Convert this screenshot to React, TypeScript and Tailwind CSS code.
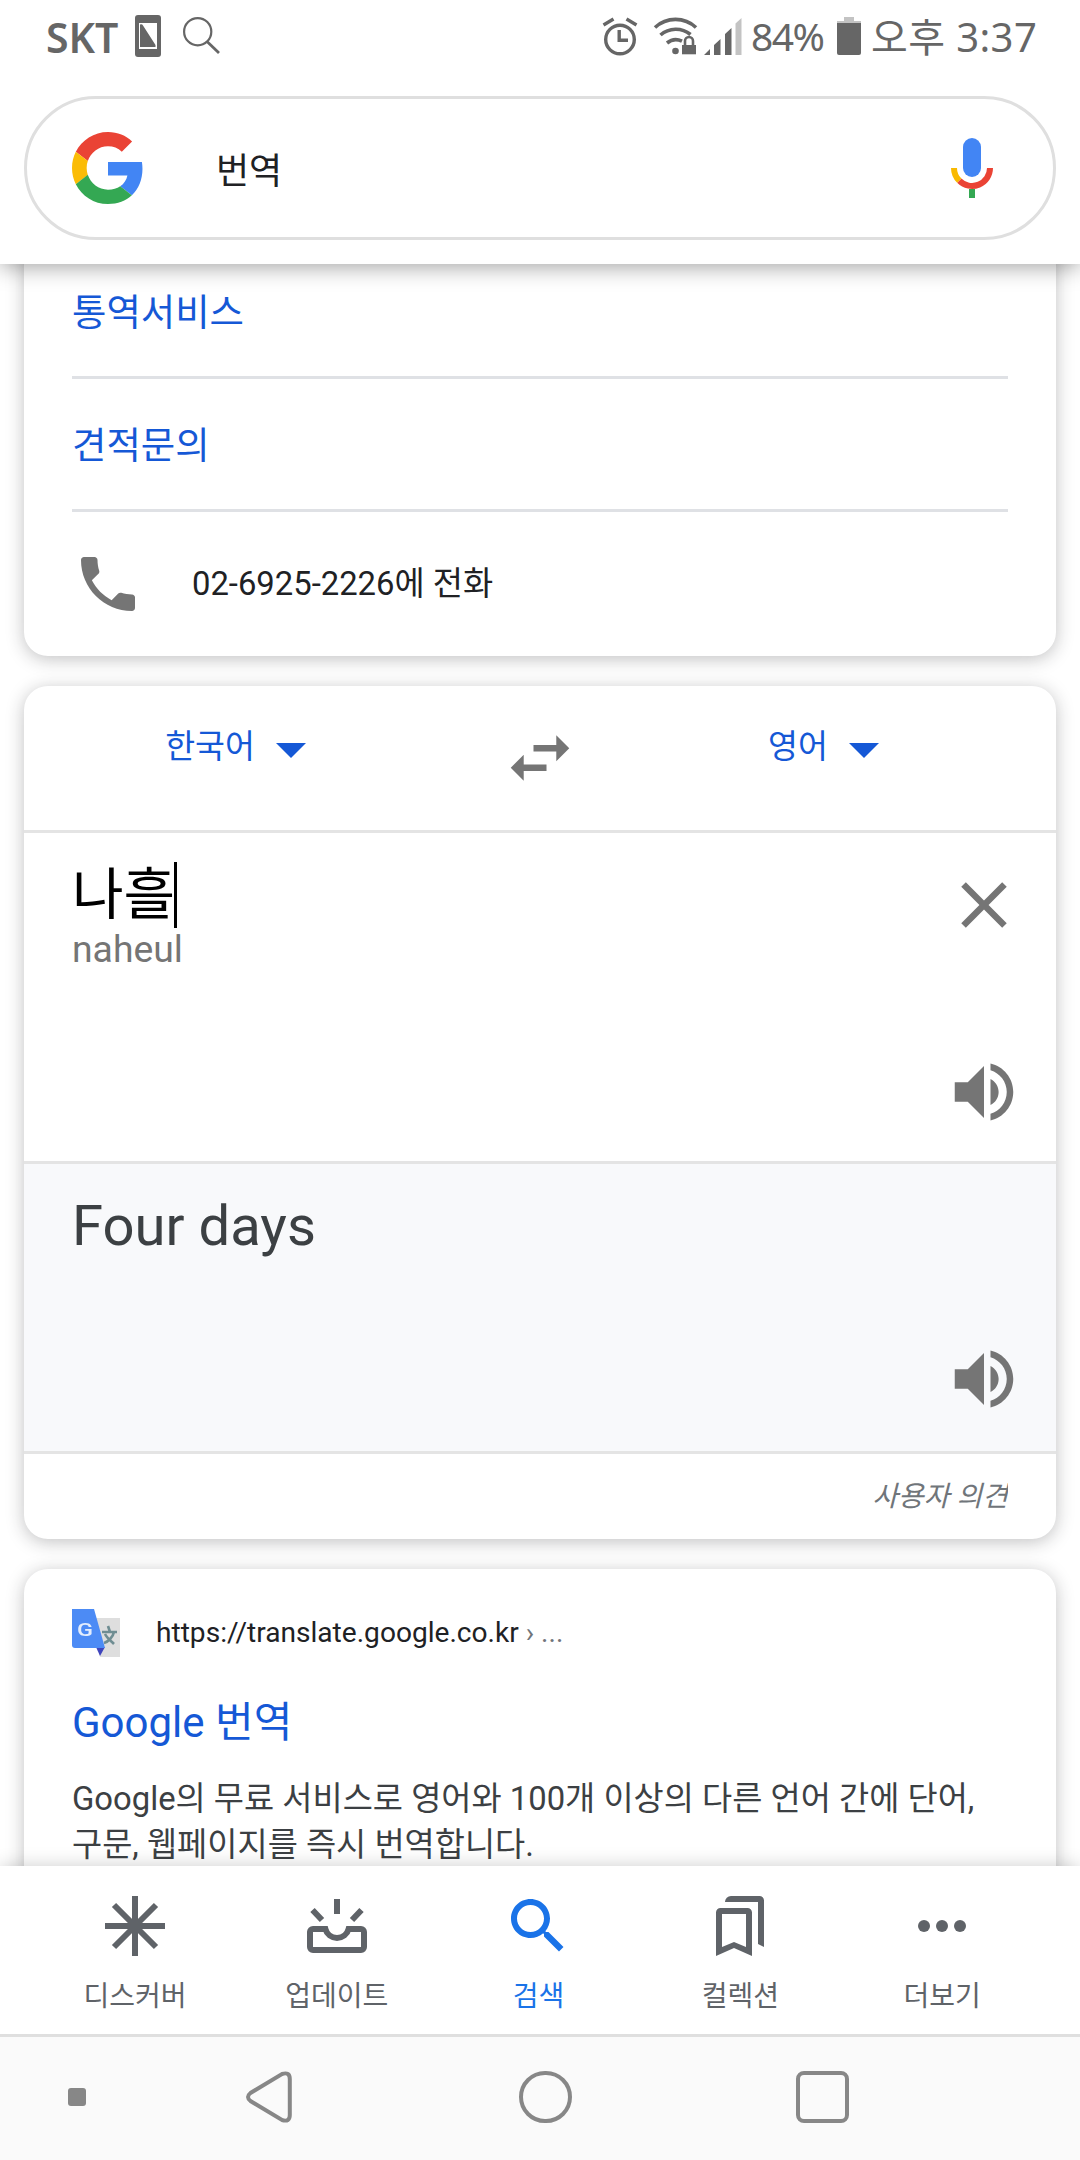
import React from "react";
import { clsx } from "clsx";

const siteLinks = ["통역서비스", "견적문의"];

const GoogleLogo = () => (
  <svg viewBox="0 0 48 48" className="w-[72px] h-[72px]">
    <path
      fill="#EA4335"
      d="M24 9.5c3.54 0 6.71 1.22 9.21 3.6l6.85-6.85C35.9 2.38 30.47 0 24 0 14.62 0 6.51 5.38 2.56 13.22l7.98 6.19C12.43 13.72 17.74 9.5 24 9.5z"
    />
    <path
      fill="#4285F4"
      d="M46.98 24.55c0-1.57-.15-3.09-.38-4.55H24v9.02h12.94c-.58 2.96-2.26 5.48-4.78 7.18l7.73 6c4.51-4.18 7.09-10.36 7.09-17.65z"
    />
    <path
      fill="#FBBC05"
      d="M10.53 28.59c-.48-1.45-.76-2.99-.76-4.59s.27-3.14.76-4.59l-7.98-6.19C.92 16.46 0 20.12 0 24c0 3.88.92 7.54 2.56 10.78l7.97-6.19z"
    />
    <path
      fill="#34A853"
      d="M24 48c6.48 0 11.93-2.13 15.89-5.81l-7.73-6c-2.15 1.45-4.92 2.3-8.16 2.3-6.26 0-11.57-4.22-13.47-9.91l-7.98 6.19C6.51 42.62 14.62 48 24 48z"
    />
  </svg>
);

const MicIcon = () => (
  <svg viewBox="0 0 72 72" className="w-[72px] h-[72px]" fill="none">
    <rect x="27" y="6" width="18" height="39" rx="9" fill="#4285F4" />
    <path d="M54 36a18 18 0 0 1-30.73 12.73" stroke="#EA4335" strokeWidth="6" />
    <path d="M18 36a18 18 0 0 0 5.27 12.73" stroke="#F9B900" strokeWidth="6" />
    <path d="M36 57v9" stroke="#34A853" strokeWidth="6" />
  </svg>
);

const SpeakerIcon = () => (
  <svg viewBox="0 0 24 24" className="w-[78px] h-[78px]" fill="#757575">
    <path d="M3 9v6h4l5 5V4L7 9H3zm13.5 3c0-1.77-1.02-3.29-2.5-4.03v8.05c1.48-.73 2.5-2.25 2.5-4.02zM14 3.23v2.06c2.89.86 5 3.54 5 6.71s-2.11 5.85-5 6.71v2.06c4.01-.91 7-4.49 7-8.77s-2.99-7.86-7-8.77z" />
  </svg>
);

const StatusBar = () => (
  <div className="h-24 flex items-start text-[#666] font-['Noto_Sans','Noto_Sans_CJK_KR',sans-serif]">
    <span className="ml-[46px] mt-[12px] w-[89px] text-[41px] leading-[50px] font-semibold">
      SKT
    </span>
    <svg viewBox="0 0 26 42" className="mt-[15px] w-[26px] h-[42px]">
      <rect width="26" height="42" rx="3" fill="#666" />
      <path d="M4 8h18v26H4z" fill="#fff" />
      <path d="M5 9.500q2-1 3 1l12.500 19.500v2H5z" fill="#666" />
    </svg>
    <svg
      viewBox="0 0 40 40"
      className="ml-[21px] mt-[16px] w-10 h-10"
      fill="none"
      stroke="#666"
      strokeWidth="2.200"
    >
      <circle cx="15.700" cy="15.700" r="13.600" />
      <path d="M25 25.500l12 11.500" strokeWidth="2.800" />
    </svg>

    {/* alarm, wifi, signal */}
    <svg
      viewBox="0 0 36 40"
      className="ml-[380px] mt-[16px] w-9 h-10"
      fill="none"
      stroke="#666"
      strokeWidth="3.400"
    >
      <circle cx="18" cy="23.500" r="14.300" />
      <path d="M17.200 14v10.200H26M1.500 9l10-6M34.500 9l-10-6" />
    </svg>
    <svg
      viewBox="0 0 46 40"
      className="ml-[15px] mt-[16px] w-[46px] h-10"
      fill="none"
      stroke="#666"
      strokeWidth="3.600"
    >
      <path d="M2 11.500a30 30 0 0 1 41 0M7.500 19a23 23 0 0 1 30-.500M14 27a14 14 0 0 1 15-1.800" />
      <circle cx="22.500" cy="35" r="3.300" fill="#666" stroke="none" />
      <path d="M29 29h14v9.300H29z" fill="#666" stroke="none" />
      <path d="M32 30v-5a4 4 0 0 1 8 0v5" strokeWidth="2.600" />
    </svg>
    <svg
      viewBox="0 0 38 38"
      className="ml-[5px] mt-[17px] w-[38px] h-[38px]"
      fill="#666"
    >
      <path d="M0 38l6-6v6zM10 28l6.500-6v16H10zM21 17l6.500-6v27H21z" />
      <path d="M31.500 6.500l6-5.500v37h-6z" fill="#c3c3c3" />
    </svg>
    <span className="ml-[9px] mt-[11px] w-[86px] text-[39px] leading-[50px] tracking-[-1.5px]">
      84%
    </span>
    <svg viewBox="0 0 24 38" className="mt-[17px] w-6 h-[38px]">
      <path d="M7 0h10v4h7v3H0V4h7z" fill="#c3c3c3" />
      <path d="M0 6h24v30a2 2 0 0 1-2 2H2a2 2 0 0 1-2-2z" fill="#666" />
    </svg>
    <span className="ml-[10px] mt-[12px] text-[40px] leading-[50px] tracking-[0.4px] whitespace-nowrap">
      오후 3:37
    </span>
  </div>
);

const TranslateFavicon = () => (
  <svg viewBox="0 0 48 48" className="w-12 h-12 blur-[0.6px]">
    <path d="M20 9h28v39H28z" fill="#dedede" />
    <path d="M24 38h9l-5 9z" fill="#3f45bd" />
    <path
      d="M30 23h15M36 17l2 6M42 23c-1 5-6 10-10 11M33 25c2 4 6 7 9 10"
      stroke="#6f8d92"
      strokeWidth="2.600"
      fill="none"
    />
    <path d="M0 0h22l11 39H3q-3 0-3-3z" fill="#4c8bf5" />
    <text
      x="5"
      y="26.500"
      fontSize="19"
      fontWeight="500"
      fill="#e3edfd"
      fontFamily="Roboto"
      textLength="16"
      lengthAdjust="spacingAndGlyphs"
    >
      G
    </text>
  </svg>
);

const LanguagePicker = ({ label }: { label: string }) => (
  <div className="w-[444px] h-[126px] flex items-center justify-center text-[#1558d6]">
    <span className="text-[32.5px] leading-10 -mt-1">{label}</span>
    <svg viewBox="0 0 24 24" className="w-[72px] h-[72px]" fill="#1558d6">
      <path d="M7 10l5 5 5-5z" />
    </svg>
  </div>
);

const navItems = [
  {
    label: "디스커버",
    icon: (
      <path
        d="M36 6v60M6 36h60M15 15l42 42M57 15L15 57"
        stroke="currentColor"
        strokeWidth="6"
      />
    ),
  },
  {
    label: "업데이트",
    icon: (
      <path
        d="M24.400 39H12a3 3 0 0 0-3 3v15a3 3 0 0 0 3 3h48a3 3 0 0 0 3-3V42a3 3 0 0 0-3-3H47.600a12 12 0 0 1-23.200 0zM36 9v15M11.500 20L21 30M60.500 20L51 30"
        stroke="currentColor"
        strokeWidth="6"
        fill="none"
      />
    ),
  },
  {
    label: "검색",
    active: true,
    icon: (
      <path
        transform="scale(3)"
        fill="currentColor"
        d="M15.500 14h-.79l-.28-.27C15.410 12.590 16 11.110 16 9.500 16 5.910 13.090 3 9.500 3S3 5.910 3 9.500 5.910 16 9.500 16c1.610 0 3.090-.59 4.230-1.570l.27.28v.79l5 4.990L20.490 19l-4.990-5zm-6 0C7.010 14 5 11.990 5 9.500S7.010 5 9.500 5 14 7.010 14 9.500 11.990 14 9.500 14z"
      />
    ),
  },
  {
    label: "컬렉션",
    icon: (
      <path
        transform="scale(3)"
        fill="currentColor"
        d="M14.500 6h-9A1.500 1.500 0 0 0 4 7.500V22l6-2.670L16 22V7.500A1.500 1.500 0 0 0 14.500 6zM14 19l-4-1.670L6 19V8h8zM7 4a2 2 0 0 1 2-2h9.500A1.500 1.500 0 0 1 20 3.500V19l-2-1V4z"
        fillRule="evenodd"
      />
    ),
  },
  {
    label: "더보기",
    icon: (
      <g fill="currentColor">
        <circle cx="18" cy="36" r="6" />
        <circle cx="36" cy="36" r="6" />
        <circle cx="54" cy="36" r="6" />
      </g>
    ),
  },
];

const BottomNav = () => (
  <nav className="relative z-10 h-[171px] shrink-0 flex pl-[34px] pt-6 bg-white border-b-[3px] border-[#dfdfdf] shadow-[0_0_18px_rgba(0,0,0,0.2)]">
    {navItems.map((item) => (
      <div
        key={item.label}
        className={clsx(
          "w-[201.8px] flex flex-col items-center",
          item.active ? "text-[#1a73e8]" : "text-[#5f6368]"
        )}
      >
        <svg viewBox="0 0 72 72" className="w-[72px] h-[72px]">
          {item.icon}
        </svg>
        <span className="mt-[15px] text-[28px] leading-10">{item.label}</span>
      </div>
    ))}
  </nav>
);

const SystemBar = () => (
  <div className="relative z-20 h-[123px] shrink-0 flex items-start bg-[#fafafa] pt-[34px]">
    <div className="ml-[68px] mt-[17px] w-[18px] h-[18px] rounded-[3px] bg-[#878787]" />
    <svg
      viewBox="0 0 46 52"
      className="ml-40 w-[46px] h-[52px]"
      fill="none"
      stroke="#878787"
      strokeWidth="4"
    >
      <path d="M36 3Q43.800.5 43.800 8v36q0 7.500-7.800 5L4.500 30Q-.5 26 4.500 22z" />
    </svg>
    <div className="ml-[227px] w-[53px] h-[52px] rounded-full border-[4px] border-[#878787]" />
    <div className="ml-[224px] w-[53px] h-[52px] rounded-[8px] border-[4px] border-[#878787]" />
  </div>
);

const App = () => {
  return (
    <div className="w-[1080px] h-[2160px] overflow-hidden flex flex-col bg-white font-['Roboto','Noto_Sans_CJK_KR',sans-serif]">
      <header className="relative z-10 h-[264px] shrink-0 bg-white shadow-[0_3px_21px_rgba(0,0,0,0.36)]">
        <StatusBar />
        <div className="mx-6 h-36 flex items-center px-[45px] rounded-full border-[3px] border-[#dfdfdf]">
          <GoogleLogo />
          <span className="ml-[72px] flex-1 pt-[7px] text-[36px] leading-[48px] text-[#202124]">
            번역
          </span>
          <MicIcon />
        </div>
      </header>

      <main className="flex-1 min-h-0 overflow-hidden px-6 flex flex-col gap-[30px]">
        {/* Site links */}
        <section className="-mt-[18px] shrink-0 px-12 rounded-b-3xl bg-white shadow-[0_3px_18px_rgba(32,33,36,0.28)]">
          {siteLinks.map((link) => (
            <div
              key={link}
              className="h-[133px] flex items-center pt-[3px] border-b-[3px] border-[#dfe1e5] text-[37.4px] leading-[48px] text-[#1558d6]"
            >
              {link}
            </div>
          ))}
          <div className="h-36 flex items-center gap-12">
            <svg viewBox="0 0 24 24" className="w-[72px] h-[72px]" fill="#757575">
              <path d="M6.620 10.790c1.440 2.830 3.760 5.140 6.590 6.590l2.200-2.200c.27-.27.67-.36 1.020-.24 1.120.37 2.330.57 3.570.57.55 0 1 .45 1 1V20c0 .55-.45 1-1 1-9.390 0-17-7.610-17-17 0-.55.45-1 1-1h3.500c.55 0 1 .45 1 1 0 1.250.2 2.450.57 3.570.11.35.03.74-.25 1.020l-2.200 2.200z" />
            </svg>
            <span className="text-[32.8px] leading-[42px] text-[#202124]">
              02-6925-2226에 전화
            </span>
          </div>
        </section>

        {/* Translate widget */}
        <section className="shrink-0 rounded-3xl bg-white shadow-[0_3px_18px_rgba(32,33,36,0.28)]">
          <div className="h-[147px] flex border-b-[3px] border-[#e4e4e4]">
            <LanguagePicker label="한국어" />
            <div className="w-36 h-36 flex items-center justify-center">
              <svg viewBox="0 0 24 24" className="w-[78px] h-[78px]" fill="#757575">
                <path d="M6.990 11L3 15l3.990 4v-3H14v-2H6.990v-3zM21 9l-3.990-4v3H10v2h7.010v3L21 9z" />
              </svg>
            </div>
            <LanguagePicker label="영어" />
          </div>
          <div className="h-[331px] flex justify-between pl-12 pr-[33px] border-b-[3px] border-[#e4e4e4]">
            <div className="pt-[29px]">
              <div className="flex text-[56px] leading-[66px] text-black">
                나흘
                <span className="-ml-px w-[3px] h-[66px] bg-black" />
              </div>
              <p className="text-[37.3px] leading-[42px] text-[#757575]">
                naheul
              </p>
            </div>
            <div className="flex flex-col justify-between pt-[33px] pb-[30px]">
              <svg viewBox="0 0 24 24" className="w-[78px] h-[78px]" fill="#757575">
                <path d="M19 6.410L17.590 5 12 10.590 6.410 5 5 6.410 10.590 12 5 17.590 6.410 19 12 13.410 17.590 19 19 17.590 13.410 12z" />
              </svg>
              <SpeakerIcon />
            </div>
          </div>
          <div className="h-[290px] flex justify-between pl-12 pr-[33px] bg-[#f8f9fb] border-b-[3px] border-[#e4e4e4]">
            <p className="pt-[29px] text-[56.2px] leading-[66px] text-[#3c4043]">
              Four days
            </p>
            <div className="flex items-end pb-[33px]">
              <SpeakerIcon />
            </div>
          </div>
          <div className="h-[85px] flex items-center justify-end pr-12">
            <span className="overflow-hidden text-[28px] leading-10 italic text-[#70757a]">
              사용자 의견
            </span>
          </div>
        </section>

        {/* Search result */}
        <section className="shrink-0 h-[340px] px-12 pt-10 rounded-3xl bg-white shadow-[0_3px_18px_rgba(32,33,36,0.28)]">
          <div className="flex items-center gap-9 text-[28.1px] leading-[36px] text-[#202124]">
            <TranslateFavicon />
            <p>
              https://translate.google.co.kr
              <span className="text-[#70757a]"> › ...</span>
            </p>
          </div>
          <h3 className="mt-[42px] text-[42px] leading-[48px] text-[#1558d6]">
            Google 번역
          </h3>
          <p className="mt-[29px] text-[32.8px] leading-[46px] text-[#3c4043] whitespace-nowrap">
            Google의 무료 서비스로 영어와 100개 이상의 다른 언어 간에 단어,
            <br />
            구문, 웹페이지를 즉시 번역합니다.
          </p>
        </section>
      </main>

      <BottomNav />
      <SystemBar />
    </div>
  );
};

export default App;
